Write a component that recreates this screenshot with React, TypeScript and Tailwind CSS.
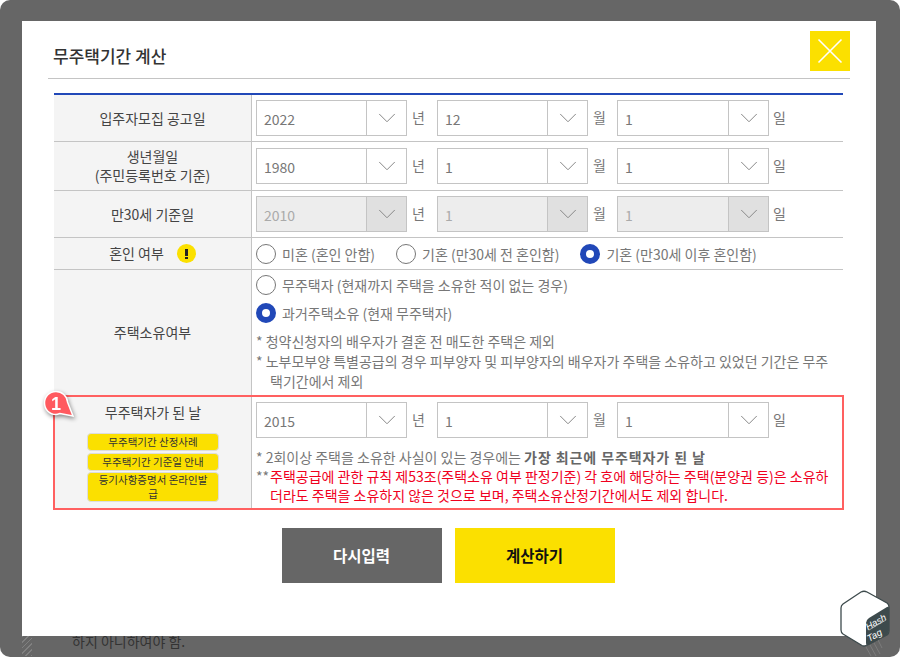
import { ChevronDown } from "lucide-react";

const font = "font-['Noto_Sans_CJK_KR','Noto_Sans',sans-serif]";

function Select({ value, width, disabled }: { value: string; width: string; disabled?: boolean }) {
  return (
    <div className={`flex h-9 items-stretch border border-[#c4c4c4] ${width} ${disabled ? "bg-[#ededed] text-[#aaa]" : "bg-white text-[#777]"}`}>
      <span className="flex flex-1 items-center pl-[7px] pt-px text-sm">{value}</span>
      <span className={`flex w-10 items-center justify-center border-l border-[#c4c4c4] ${disabled ? "bg-[#e0e0e0]" : ""}`}>
        <ChevronDown className="h-[30px] w-[30px] text-[#888]" strokeWidth={0.8} />
      </span>
    </div>
  );
}

function DateRow({ year, month, day, disabled }: { year: string; month: string; day: string; disabled?: boolean }) {
  return (
    <div className="flex items-center text-sm text-[#777]">
      <Select value={year} width="w-[151px]" disabled={disabled} />
      <span className="w-[30px] pb-0.5 pl-[5px]">년</span>
      <Select value={month} width="w-[151px]" disabled={disabled} />
      <span className="w-[29px] pb-0.5 pl-[5px]">월</span>
      <Select value={day} width="w-[152px]" disabled={disabled} />
      <span className="w-[30px] pb-0.5 pl-[4px]">일</span>
    </div>
  );
}

function Radio({ checked, label }: { checked?: boolean; label: string }) {
  return (
    <span className="flex items-center gap-[6px] text-sm text-[#777]">
      {checked ? (
        <span className="h-5 w-5 rounded-full border-[6px] border-[#2148b8] bg-white" />
      ) : (
        <span className="h-5 w-5 rounded-full border-[1.5px] border-[#777] bg-white" />
      )}
      {label}
    </span>
  );
}

function HashBadge() {
  return (
    <svg width="52" height="67" viewBox="0 0 52 67" className="absolute left-[840px] top-[590px]">
      <path d="M26 57 L31 66 M30 55 L36 66 M34 53 L40 64 M38 50 L42 58" stroke="#8c8c8c" strokeWidth="0.6" fill="none" />
      <path d="M21 2 Q24 0.5 27 2 L47 13 Q49 14.5 49 17 V41 Q49 43.5 47 45 L26 55.5 Q24 56.5 22 55.5 L3 44 Q1 42.5 1 40 V18 Q1 15.5 3 14 Z" fill="#fff" stroke="#3d4a4c" strokeWidth="1.3" />
      <path d="M29 28 L47 17 Q49 16 49 18 V41 Q49 43.5 47 45 L29 55 Q26 56.5 26 53 V33 Q26 30 29 28 Z" fill="#3d4a4c" />
      <text x="37.5" y="35" fill="#fff" fontSize="9.5" fontStyle="italic" textAnchor="middle" transform="rotate(-30 37.5 35)" fontFamily="Liberation Sans, sans-serif">Hash</text>
      <path d="M29 40 L46 30" stroke="#c8cccc" strokeWidth="0.7" />
      <text x="36" y="48" fill="#fff" fontSize="9.5" fontStyle="italic" textAnchor="middle" transform="rotate(-30 36 48)" fontFamily="Liberation Sans, sans-serif">Tag</text>
    </svg>
  );
}

function Pin() {
  return (
    <svg width="36" height="34" viewBox="0 0 36 34" className="absolute -left-[12px] -top-[7px] drop-shadow-[1px_2px_2px_rgba(0,0,0,0.45)]">
      <path d="M13 1.5 C19 1.5 24 6 24.5 12 L30 26 L17 23.5 C15 24.2 14 24.5 13 24.5 C6.5 24.5 1.5 19.5 1.5 13 C1.5 6.5 6.5 1.5 13 1.5 Z" fill="#ff5a5f" stroke="#fff" strokeWidth="1.5" />
      <text x="13" y="19.5" fill="#fff" fontSize="18" fontWeight="700" textAnchor="middle" fontFamily="Liberation Sans, sans-serif">1</text>
    </svg>
  );
}

const labelCell = "flex shrink-0 flex-col items-center justify-center border-r border-[#c4c4c4] bg-[#f4f4f4] text-center text-sm leading-[19px] text-[#444]";
const linkBtn = "rounded-[4px] border border-[#ddd] bg-[#fbe000] px-2 text-[10.5px] leading-[14px] text-[#333]";

export default function App() {
  return (
    <div className={`relative h-[657px] w-[900px] overflow-hidden rounded-[10px] bg-[#666] ${font}`}>
      <div className="pl-[22px] pt-[21px]">
        <div className="h-[615px] w-[854px] bg-white px-[26px] pt-[10px]">
          <div className="flex h-[48px] items-start justify-between border-b border-[#c4c4c4] pl-[5px]">
            <h2 className="pt-[12px] text-[17px] font-medium text-[#333]">무주택기간 계산</h2>
            <button className="flex h-10 w-10 items-center justify-center bg-[#fbe000]">
              <svg width="26" height="26" viewBox="0 0 26 26" stroke="#fff" strokeWidth="1.6"><path d="M1.5 1.5 L24.5 24.5 M24.5 1.5 L1.5 24.5" /></svg>
            </button>
          </div>

          <div className="ml-[6px] mr-[7px] mt-[14px] border-t-2 border-[#2148b8]">
            <div className="flex h-[47px] border-b border-[#c4c4c4]">
              <div className={`${labelCell} w-[198px]`}>입주자모집 공고일</div>
              <div className="flex items-center pl-[4px]"><DateRow year="2022" month="12" day="1" /></div>
            </div>
            <div className="flex h-[49px] border-b border-[#c4c4c4]">
              <div className={`${labelCell} w-[198px]`}>생년월일<br />(주민등록번호 기준)</div>
              <div className="flex items-center pl-[4px]"><DateRow year="1980" month="1" day="1" /></div>
            </div>
            <div className="flex h-[47px] border-b border-[#c4c4c4]">
              <div className={`${labelCell} w-[198px]`}>만30세 기준일</div>
              <div className="flex items-center pl-[4px]"><DateRow year="2010" month="1" day="1" disabled /></div>
            </div>
            <div className="flex h-[32px] border-b border-[#c4c4c4]">
              <div className={`${labelCell} w-[198px] !flex-row gap-[13px]`}>
                혼인 여부
                <span className="flex h-[19px] w-[19px] flex-col items-center justify-center gap-px rounded-full bg-[#fbe000]">
                  <span className="h-[7px] w-[3px] bg-[#222]" />
                  <span className="h-[2px] w-[3px] bg-[#222]" />
                </span>
              </div>
              <div className="flex items-center gap-[21px] pl-[4px]">
                <Radio label="미혼 (혼인 안함)" />
                <Radio label="기혼 (만30세 전 혼인함)" />
                <Radio checked label="기혼 (만30세 이후 혼인함)" />
              </div>
            </div>
            <div className="flex h-[126px] border-b border-[#c4c4c4]">
              <div className={`${labelCell} w-[198px]`}>주택소유여부</div>
              <div className="flex flex-col pl-[4px] pt-[5px] text-sm text-[#777]">
                <Radio label="무주택자 (현재까지 주택을 소유한 적이 없는 경우)" />
                <div className="mt-2"><Radio checked label="과거주택소유 (현재 무주택자)" /></div>
                <p className="mt-[9px] leading-[19px]">* 청약신청자의 배우자가 결혼 전 매도한 주택은 제외</p>
                <p className="mt-px w-[578px] pl-[14px] -indent-[14px] leading-[19.5px]">* 노부모부양 특별공급의 경우 피부양자 및 피부양자의 배우자가 주택을 소유하고 있었던 기간은 무주택기간에서 제외</p>
              </div>
            </div>
            <div className="relative -mx-px -mt-px flex h-[115px] border-2 border-[#ff6060]">
              <div className={`${labelCell} w-[197px] !justify-start pt-[6px]`}>
                무주택자가 된 날
                <div className="mt-[11px] flex w-[132px] flex-col gap-[2px]">
                  <a className={`${linkBtn} py-px`}>무주택기간 산정사례</a>
                  <a className={`${linkBtn} py-px`}>무주택기간 기준일 안내</a>
                  <a className={`${linkBtn} -mt-px`}>등기사항증명서 온라인발급</a>
                </div>
              </div>
              <div className="flex flex-col pl-[4px] pt-[5px]">
                <DateRow year="2015" month="1" day="1" />
                <p className="mt-[10px] text-sm leading-[19px] text-[#777]">* 2회이상 주택을 소유한 사실이 있는 경우에는 <b className="font-bold tracking-[0.9px] text-[#666]">가장 최근에 무주택자가 된 날</b></p>
                <div className="flex text-sm leading-[19px]">
                  <span className="w-[14px] shrink-0 text-[#777]">**</span>
                  <p className="w-[560px] text-[#f0001e]">주택공급에 관한 규칙 제53조(주택소유 여부 판정기준) 각 호에 해당하는 주택(분양권 등)은 소유하더라도 주택을 소유하지 않은 것으로 보며, 주택소유산정기간에서도 제외 합니다.</p>
                </div>
              </div>
              <Pin />
            </div>
          </div>

          <div className="mr-[2px] mt-[18px] flex justify-center gap-[13px]">
            <button className="h-[55px] w-[160px] bg-[#666] text-[15.5px] font-bold text-white">다시입력</button>
            <button className="h-[55px] w-[160px] bg-[#fbe000] text-[15.5px] font-bold text-[#111]">계산하기</button>
          </div>
        </div>
      </div>
      <div className="absolute left-[72px] top-[636px] h-[21px] overflow-hidden">
        <p className="-mt-[5px] text-sm leading-5 text-[#333]">하지 아니하여야 함.</p>
      </div>
      <span className="absolute left-[22px] top-[636px] h-[20px] w-[10px] bg-[repeating-linear-gradient(135deg,#808080_0,#808080_1px,transparent_1px,transparent_4px)]" />
      <HashBadge />
    </div>
  );
}
